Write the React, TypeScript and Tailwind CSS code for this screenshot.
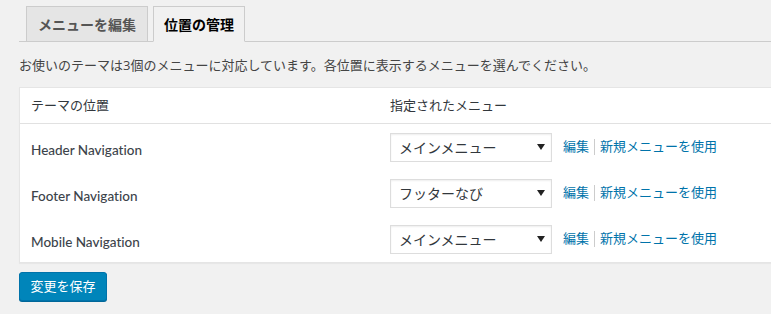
import React from "react";

const rows = [
  { name: "Header Navigation", value: "メインメニュー" },
  { name: "Footer Navigation", value: "フッターなび" },
  { name: "Mobile Navigation", value: "メインメニュー" },
];

export default function App() {
  const ff = { fontFamily: '"Open Sans", "Noto Sans CJK JP", sans-serif' };
  return (
    <div className="w-[771px] h-[314px] bg-[#f1f1f1] overflow-hidden text-[13px] text-[#444]" style={ff}>
      <div className="pl-[19px]">
        {/* Tabs */}
        <div className="pt-[6px] flex items-end border-b border-[#ccc] pl-[7px] h-[42px]">
          <div className="h-[36px] -mb-px px-[10px] bg-[#e5e5e5] border border-[#ccc] flex items-center text-[14px] font-semibold text-[#555] w-[122px] justify-center">
            メニューを編集
          </div>
          <div className="ml-[5px] h-[36px] -mb-px px-[10px] bg-[#f1f1f1] border border-[#ccc] border-b-[#f1f1f1] flex items-center text-[14px] font-semibold text-black w-[92px] justify-center">
            位置の管理
          </div>
        </div>
        {/* Description */}
        <div className="h-[24px] mt-[12px] flex items-center text-[#444]">
          お使いのテーマは3個のメニューに対応しています。各位置に表示するメニューを選んでください。
        </div>
        {/* Table */}
        <div className="mt-[9px] w-[800px] bg-white border border-[#e5e5e5] shadow-[0_1px_1px_rgba(0,0,0,0.04)]">
          <div className="h-[36px] flex items-center border-b border-[#e1e1e1] text-[#32373c]">
            <div className="w-[370px] pl-[11px]">テーマの位置</div>
            <div>指定されたメニュー</div>
          </div>
          {rows.map((r) => (
            <div key={r.name} className="h-[46px] flex items-center">
              <div
                className="w-[370px] pl-[11px] pt-[7px] font-medium text-[13.5px] text-[#3c434a] [font-variant-ligatures:none]"
                style={{ fontFamily: '"Lato", "Noto Sans", sans-serif' }}
              >
                {r.name}
              </div>
              <div className="flex items-center">
                <div className="w-[162px] h-[29px] border border-[#ddd] shadow-[inset_0_1px_2px_rgba(0,0,0,0.07)] bg-white flex items-center justify-between pl-[8px] pr-[6px] text-[14px] text-[#32373c]">
                  <span>{r.value}</span>
                  <svg width="8" height="6" viewBox="0 0 8 6">
                    <path d="M0 0 L8 0 L4 6 Z" fill="#222" />
                  </svg>
                </div>
                <a className="ml-[11px] text-[#0073aa]">編集</a>
                <span className="mx-[5px] w-px h-[16px] bg-[#ccc]" />
                <a className="text-[#0073aa]">新規メニューを使用</a>
              </div>
            </div>
          ))}
        </div>
        {/* Button */}
        <div className="mt-[9px]">
          <button className="w-[88px] h-[29px] bg-[#0085ba] border border-[#0073aa] rounded-[3px] shadow-[0_1px_0_#006799] text-white text-[13px] flex items-center justify-center">
            変更を保存
          </button>
        </div>
      </div>
    </div>
  );
}
